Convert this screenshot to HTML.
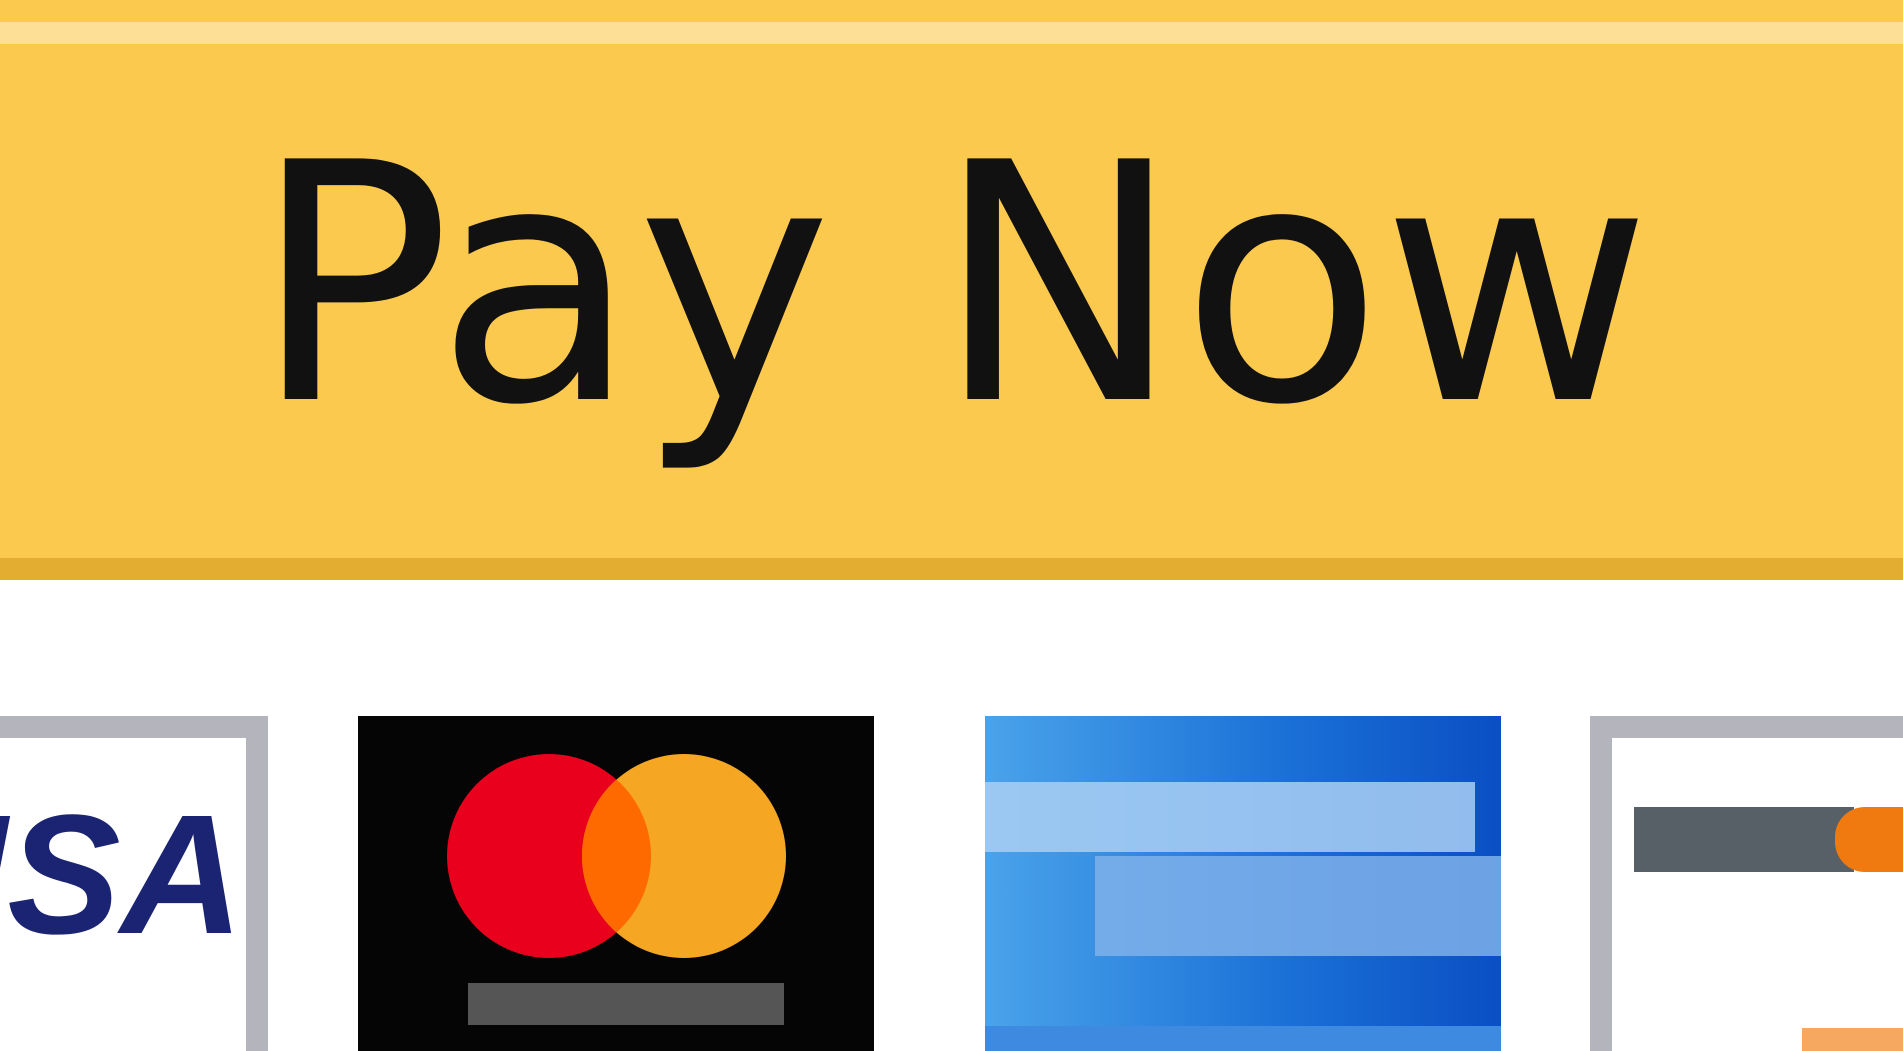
<!DOCTYPE html>
<html><head><meta charset="utf-8"><style>
html,body{margin:0;padding:0;width:1903px;height:1051px;overflow:hidden;background:#fff;position:relative;font-family:"Liberation Sans","DejaVu Sans",sans-serif}
.btn{position:absolute;left:0;top:0;width:1903px;height:580px;background:#fbc94e}
.stripe{position:absolute;left:0;top:22px;width:1903px;height:22px;background:#fde095}
.bot{position:absolute;left:0;top:558px;width:1903px;height:22px;background:#e3ad32}
.txt{position:absolute;left:0;width:1903px;top:85px;text-align:center;font-size:330px;line-height:400px;color:#111;font-family:"DejaVu Sans","Liberation Sans",sans-serif;letter-spacing:-1px}
.card{position:absolute;top:716px;height:340px;box-sizing:border-box}
</style></head><body>
<div class="btn"><div class="stripe"></div><div class="bot"></div>
<div class="txt">Pay Now</div></div>

<div class="card" style="left:0;width:268px;background:#fff;border:22px solid #b4b4bc;border-left:none;border-bottom:none">
<div style="position:absolute;left:-40px;top:62px;font-size:170px;line-height:150px;font-weight:bold;font-style:italic;color:#1a2472">ISA</div>
</div>

<div class="card" style="left:358px;width:516px;background:#050505">
<svg width="516" height="340" style="position:absolute;left:0;top:0">
<defs><clipPath id="c"><circle cx="191" cy="140" r="102"/></clipPath></defs>
<circle cx="191" cy="140" r="102" fill="#e8001c"/>
<circle cx="326" cy="140" r="102" fill="#f5a623"/>
<circle cx="326" cy="140" r="102" fill="#ff6a00" clip-path="url(#c)"/>
<rect x="110" y="267" width="316" height="42" fill="#555"/>
</svg>
</div>

<div class="card" style="left:985px;width:516px;background:linear-gradient(90deg,#4aa3ea,#1a6fd6 60%,#0a4fc4)">
<div style="position:absolute;left:0;top:66px;width:490px;height:70px;background:#a9cff3;opacity:.85"></div>
<div style="position:absolute;left:110px;top:140px;width:406px;height:100px;background:#7fb0ea;opacity:.85"></div>
<div style="position:absolute;left:0;top:310px;width:516px;height:30px;background:#3d8ae0"></div>
</div>

<div class="card" style="left:1590px;width:320px;background:#fff;border:22px solid #b4b4bc;border-right:none;border-bottom:none">
<div style="position:absolute;left:22px;top:69px;width:220px;height:65px;background:#566066"></div>
<div style="position:absolute;left:223px;top:69px;width:80px;height:65px;background:#f07a10;border-radius:30px 0 0 30px"></div>
<div style="position:absolute;left:190px;top:290px;width:120px;height:25px;background:#f7a860"></div>
</div>
</body></html>
